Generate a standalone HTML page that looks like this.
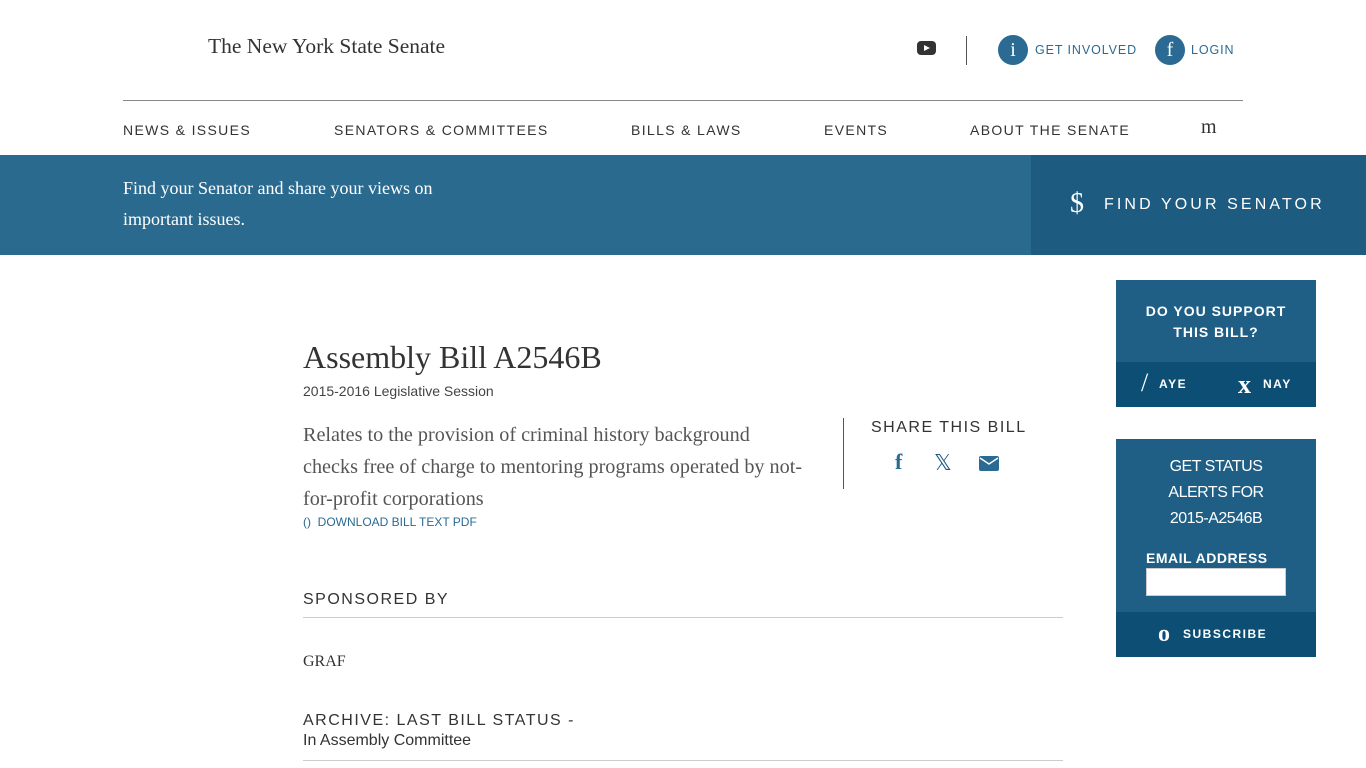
<!DOCTYPE html>
<html><head><meta charset="utf-8"><style>
*{margin:0;padding:0;box-sizing:border-box}
body{width:1366px;height:768px;overflow:hidden;background:#fff;font-family:"Liberation Sans",sans-serif;color:#333;position:relative}
.a{position:absolute}
.serif{font-family:"Liberation Serif",serif}
.nav{font-size:14px;letter-spacing:1.35px;color:#333;top:122px}
.circ{width:30px;height:30px;border-radius:50%;background:#2a6a93;color:#fff;font-family:"Liberation Serif",serif;font-size:20px;text-align:center;line-height:30px}
.toplink{font-size:12.5px;letter-spacing:0.9px;color:#2a6a93;top:43px}
</style></head><body>
<div class="a serif" style="left:208px;top:34px;font-size:21.5px;color:#333">The New York State Senate</div>
<div class="a" style="left:917px;top:41px;width:19px;height:14px;background:#333;border-radius:4px"></div>
<div class="a" style="left:924px;top:45px;width:0;height:0;border-left:6px solid #fff;border-top:3.5px solid transparent;border-bottom:3.5px solid transparent"></div>
<div class="a" style="left:966px;top:36px;width:1px;height:29px;background:#555"></div>
<div class="a circ" style="left:998px;top:35px">i</div>
<div class="a toplink" style="left:1035px">GET INVOLVED</div>
<div class="a circ" style="left:1155px;top:35px">f</div>
<div class="a toplink" style="left:1191px">LOGIN</div>
<div class="a" style="left:123px;top:100px;width:1120px;height:1px;background:#888"></div>
<div class="a nav" style="left:123px">NEWS &amp; ISSUES</div>
<div class="a nav" style="left:334px">SENATORS &amp; COMMITTEES</div>
<div class="a nav" style="left:631px">BILLS &amp; LAWS</div>
<div class="a nav" style="left:824px">EVENTS</div>
<div class="a nav" style="left:970px">ABOUT THE SENATE</div>
<div class="a serif" style="left:1201px;top:116px;font-size:20px;color:#333">m</div>
<div class="a" style="left:0;top:155px;width:1366px;height:100px;background:#2a6a8f"></div>
<div class="a" style="left:1031px;top:155px;width:335px;height:100px;background:#1d5c80"></div>
<div class="a serif" style="left:123px;top:173px;font-size:18px;line-height:31px;color:#fff;font-weight:500">Find your Senator and share your views on<br>important issues.</div>
<div class="a serif" style="left:1070px;top:188px;font-size:28px;color:#fff">$</div>
<div class="a" style="left:1104px;top:196px;font-size:16px;letter-spacing:3.1px;color:#fff">FIND YOUR SENATOR</div>
<div class="a serif" style="left:303px;top:339px;font-size:32px;color:#333">Assembly Bill A2546B</div>
<div class="a" style="left:303px;top:383px;font-size:14px;color:#444">2015-2016 Legislative Session</div>
<div class="a serif" style="left:303px;top:419px;font-size:20.2px;line-height:32px;color:#555;width:505px">Relates to the provision of criminal history background checks free of charge to mentoring programs operated by not-for-profit corporations</div>
<div class="a" style="left:303px;top:515px;font-size:12px;color:#2a6a93">()&nbsp;&nbsp;DOWNLOAD BILL TEXT PDF</div>
<div class="a" style="left:843px;top:418px;width:1px;height:71px;background:#555"></div>
<div class="a" style="left:871px;top:419px;font-size:16px;letter-spacing:1.5px;color:#333">SHARE THIS BILL</div>
<div class="a serif" style="left:895px;top:449px;font-size:22px;font-weight:bold;color:#2a6a93">f</div>
<div class="a" style="left:934px;top:450px;font-size:22px;color:#1f5a84">𝕏</div>
<svg class="a" style="left:979px;top:456px" width="20" height="15" viewBox="0 0 20 15"><rect width="20" height="15" rx="2" fill="#2a6a93"/><path d="M1 2 L10 8 L19 2" stroke="#fff" stroke-width="1.5" fill="none"/></svg>
<div class="a" style="left:303px;top:591px;font-size:16px;letter-spacing:1.5px;color:#333">SPONSORED BY</div>
<div class="a" style="left:303px;top:617px;width:760px;height:1px;background:#ccc"></div>
<div class="a serif" style="left:303px;top:653px;font-size:16px;color:#333">GRAF</div>
<div class="a" style="left:303px;top:712px;font-size:16px;letter-spacing:1.5px;color:#333">ARCHIVE: LAST BILL STATUS -</div>
<div class="a" style="left:303px;top:732px;font-size:16px;color:#333">In Assembly Committee</div>
<div class="a" style="left:303px;top:760px;width:760px;height:1px;background:#ccc"></div>
<div class="a" style="left:1116px;top:280px;width:200px;height:127px;background:#1f5f86"></div>
<div class="a" style="left:1116px;top:362px;width:200px;height:45px;background:#0d4e74"></div>
<div class="a" style="left:1116px;top:301px;width:200px;text-align:center;font-size:14px;line-height:21px;letter-spacing:1px;color:#fff;font-weight:bold">DO YOU SUPPORT<br>THIS BILL?</div>
<div class="a serif" style="left:1141px;top:368px;font-size:26px;color:#fff">/</div>
<div class="a" style="left:1159px;top:377px;font-size:12px;letter-spacing:1.5px;color:#fff;font-weight:bold">AYE</div>
<div class="a serif" style="left:1238px;top:370px;font-size:26px;color:#fff;font-weight:bold">x</div>
<div class="a" style="left:1263px;top:377px;font-size:12px;letter-spacing:1.5px;color:#fff;font-weight:bold">NAY</div>
<div class="a" style="left:1116px;top:439px;width:200px;height:218px;background:#1f5f86"></div>
<div class="a" style="left:1116px;top:612px;width:200px;height:45px;background:#0d4e74"></div>
<div class="a" style="left:1116px;top:454px;width:200px;text-align:center;font-size:16px;line-height:26px;color:#fff;letter-spacing:-0.5px">GET STATUS<br>ALERTS FOR<br>2015-A2546B</div>
<div class="a" style="left:1146px;top:550px;font-size:14px;letter-spacing:0.5px;color:#fff;font-weight:bold">EMAIL ADDRESS</div>
<div class="a" style="left:1146px;top:568px;width:140px;height:28px;background:#fff;border:1px solid #ccc"></div>
<div class="a serif" style="left:1158px;top:621px;font-size:24px;color:#fff;font-weight:bold">o</div>
<div class="a" style="left:1183px;top:627px;font-size:12px;letter-spacing:1.5px;color:#fff;font-weight:bold">SUBSCRIBE</div>
</body></html>
